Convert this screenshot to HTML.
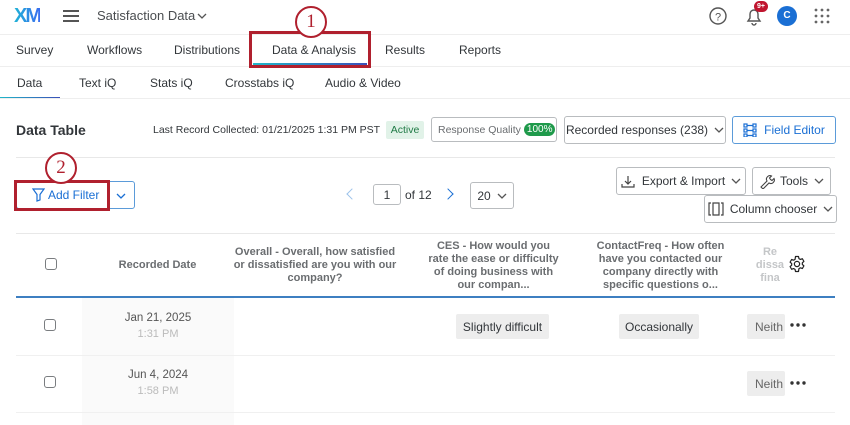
<!DOCTYPE html>
<html><head><meta charset="utf-8"><style>
*{box-sizing:border-box;margin:0;padding:0}
body{width:850px;height:425px;overflow:hidden;background:#fff;font-family:"Liberation Sans",sans-serif;color:#32363a;position:relative}
.a{position:absolute;white-space:nowrap}
.hl{position:absolute;height:1px;background:#e8e8e8}
.t{font-size:12px;line-height:14px}
.btn{position:absolute;border:1px solid #b9bcbf;border-radius:3px;background:#fff;font-size:12px;display:flex;align-items:center;justify-content:center;white-space:nowrap;color:#32363a}
.cv{margin-left:6px;display:block}
.hd{position:absolute;font-size:11px;font-weight:bold;color:#6a6d70;text-align:center;line-height:13px}
.cb{position:absolute;width:12px;height:12px;border:1.3px solid #7a7d80;border-radius:3px}
.pill{position:absolute;background:#ededed;font-size:12px;display:flex;align-items:center;justify-content:center;border-radius:2px}
.red{position:absolute;border:3px solid #b0202e}
.rc{position:absolute;width:32px;height:32px;border:2.5px solid #b0202e;border-radius:50%;background:#fff;color:#b0202e;font-size:19px;display:flex;align-items:center;justify-content:center;font-family:"Liberation Serif",serif}
</style></head><body>
<svg width="0" height="0" style="position:absolute"><defs><symbol id="cv" viewBox="0 0 10 6"><path d="M1 1l4 4 4-4" fill="none" stroke="#555" stroke-width="1.3"/></symbol></defs></svg>
<!-- top bar -->
<div class="a" style="left:14px;top:5px;font-size:20px;font-weight:bold;letter-spacing:-2px;background:linear-gradient(90deg,#1fb3d6,#3a6ef0);-webkit-background-clip:text;color:transparent">XM</div>
<div class="a" style="left:63px;top:10px;width:16px;height:2px;background:#555;box-shadow:0 5px 0 #555,0 10px 0 #555"></div>
<div class="a" style="left:97px;top:8px;font-size:13px;color:#4a4d50">Satisfaction Data</div>
<svg class="a" style="left:197px;top:13px" width="10" height="6"><use href="#cv"/></svg>
<svg class="a" style="left:709px;top:7px" width="18" height="18"><circle cx="9" cy="9" r="8" fill="none" stroke="#555" stroke-width="1.4"/><text x="9" y="13.5" font-size="11" text-anchor="middle" fill="#555" font-family="Liberation Sans">?</text></svg>
<svg class="a" style="left:744px;top:5px" width="20" height="22"><path d="M4 16h12l-2-3V9a4 4 0 0 0-8 0v4z" fill="none" stroke="#555" stroke-width="1.4"/><path d="M8 18a2 2 0 0 0 4 0" fill="none" stroke="#555" stroke-width="1.4"/></svg>
<div class="a" style="left:754px;top:1px;width:14px;height:11px;border-radius:6px;background:#c0152f;color:#fff;font-size:7px;font-weight:bold;text-align:center;line-height:11px">9+</div>
<div class="a" style="left:777px;top:6px;width:20px;height:20px;border-radius:50%;background:#1a6fd4;color:#fff;font-size:10px;font-weight:bold;text-align:center;line-height:20px">C</div>
<svg class="a" style="left:814px;top:8px" width="16" height="16"><g fill="#666"><circle cx="2" cy="2" r="1.4"/><circle cx="8" cy="2" r="1.4"/><circle cx="14" cy="2" r="1.4"/><circle cx="2" cy="8" r="1.4"/><circle cx="8" cy="8" r="1.4"/><circle cx="14" cy="8" r="1.4"/><circle cx="2" cy="14" r="1.4"/><circle cx="8" cy="14" r="1.4"/><circle cx="14" cy="14" r="1.4"/></g></svg>
<div class="hl" style="left:0;top:34px;width:850px;background:#eee"></div>
<!-- tabs -->
<div class="a t" style="left:16px;top:43px">Survey</div>
<div class="a t" style="left:87px;top:43px">Workflows</div>
<div class="a t" style="left:174px;top:43px">Distributions</div>
<div class="a t" style="left:272px;top:43px">Data &amp; Analysis</div>
<div class="a t" style="left:385px;top:43px">Results</div>
<div class="a t" style="left:459px;top:43px">Reports</div>
<div class="a" style="left:253px;top:63px;width:114px;height:2px;background:linear-gradient(90deg,#21b6c9,#3b4fb8)"></div>
<div class="hl" style="left:0;top:66px;width:850px;background:#eee"></div>
<div class="a t" style="left:17px;top:76px">Data</div>
<div class="a t" style="left:79px;top:76px">Text iQ</div>
<div class="a t" style="left:150px;top:76px">Stats iQ</div>
<div class="a t" style="left:225px;top:76px">Crosstabs iQ</div>
<div class="a t" style="left:325px;top:76px">Audio &amp; Video</div>
<div class="a" style="left:0;top:97px;width:60px;height:2px;background:linear-gradient(90deg,#21b6c9,#3b4fb8)"></div>
<div class="hl" style="left:0;top:98px;width:850px;background:#eee"></div>
<div class="red" style="left:249px;top:31px;width:122px;height:37px"></div>
<div class="rc" style="left:295px;top:6px">1</div>
<!-- data table header -->
<div class="a" style="left:16px;top:122px;font-size:14px;font-weight:bold">Data Table</div>
<div class="a" style="left:153px;top:124px;font-size:10.5px">Last Record Collected: 01/21/2025 1:31 PM PST</div>
<div class="a" style="left:386px;top:121px;width:38px;height:18px;background:#e1f2e8;border-radius:2px;color:#1f7a45;font-size:10.5px;text-align:center;line-height:18px">Active</div>
<div class="btn" style="left:431px;top:117px;width:126px;height:25px;font-size:10.5px;color:#6a6d70;justify-content:flex-start;padding-left:6px">Response Quality <span style="background:#1f9a4b;color:#fff;border-radius:8px;padding:1px 3px;margin-left:3px;font-size:10px">100%</span></div>
<div class="btn" style="left:564px;top:116px;width:162px;height:28px">Recorded responses (238)<svg class="cv" width="10" height="6"><use href="#cv"/></svg></div>
<div class="btn" style="left:732px;top:116px;width:104px;height:28px;border-color:#5b9bd9;color:#1a6fd4"><svg width="14" height="14" style="margin-right:7px"><g fill="none" stroke="#1a6fd4" stroke-width="1.2"><rect x="1" y="1" width="3" height="3"/><rect x="10" y="1" width="3" height="3"/><rect x="1" y="6" width="3" height="3"/><rect x="10" y="6" width="3" height="3"/><rect x="1" y="11" width="3" height="3"/><rect x="10" y="11" width="3" height="3"/><path d="M4 2.5h6M4 7.5h6M4 12.5h6"/></g></svg>Field Editor</div>
<div class="hl" style="left:16px;top:157px;width:819px"></div>
<!-- filter -->
<div class="btn" style="left:16px;top:181px;width:119px;height:28px;border-color:#5b9bd9"></div>
<div class="a" style="left:108px;top:181px;width:1px;height:28px;background:#5b9bd9"></div>
<svg class="a" style="left:116px;top:193px" width="10" height="6"><path d="M1 1l4 4 4-4" fill="none" stroke="#1a6fd4" stroke-width="1.3"/></svg>
<svg class="a" style="left:32px;top:188px" width="13" height="14"><path d="M1 1h11L8 6.5V12L5 13V6.5z" fill="none" stroke="#1a6fd4" stroke-width="1.2"/></svg>
<div class="a" style="left:48px;top:188px;font-size:12px;color:#1a6fd4">Add Filter</div>
<div class="red" style="left:14px;top:180px;width:96px;height:31px"></div>
<div class="rc" style="left:45px;top:152px">2</div>
<!-- pager -->
<div class="a" style="left:348px;top:190px;width:8px;height:8px;border-left:1.5px solid #9cc2ea;border-bottom:1.5px solid #9cc2ea;transform:rotate(45deg)"></div>
<div class="btn" style="left:373px;top:184px;width:28px;height:21px">1</div>
<div class="a t" style="left:405px;top:188px">of 12</div>
<div class="a" style="left:444px;top:190px;width:8px;height:8px;border-right:1.8px solid #1a6fd4;border-top:1.8px solid #1a6fd4;transform:rotate(45deg)"></div>
<div class="btn" style="left:470px;top:182px;width:44px;height:27px">20<svg class="cv" width="10" height="6"><use href="#cv"/></svg></div>
<div class="btn" style="left:616px;top:167px;width:130px;height:28px"><svg width="14" height="13" style="margin-right:7px"><path d="M7 1v8M4 6l3 3 3-3M1 9v3h12V9" fill="none" stroke="#444" stroke-width="1.2"/></svg>Export &amp; Import<svg class="cv" width="10" height="6"><use href="#cv"/></svg></div>
<div class="btn" style="left:752px;top:167px;width:79px;height:28px"><svg width="16" height="16" style="margin-right:5px"><path d="M2 14l6-6a3.5 3.5 0 0 1 4.5-5l-2 2 1 1.5 1.5 1 2-2a3.5 3.5 0 0 1-5 4.5l-6 6z" fill="none" stroke="#444" stroke-width="1.1"/></svg>Tools<svg class="cv" width="10" height="6"><use href="#cv"/></svg></div>
<div class="btn" style="left:704px;top:195px;width:133px;height:28px"><svg width="16" height="14" style="margin-right:6px"><path d="M3 1H1v12h2M13 1h2v12h-2M5 1h6v12H5z" fill="none" stroke="#444" stroke-width="1.2"/></svg>Column chooser<svg class="cv" width="10" height="6"><use href="#cv"/></svg></div>
<div class="hl" style="left:16px;top:233px;width:819px"></div>
<!-- table header -->
<div class="cb" style="left:45px;top:258px"></div>
<div class="hd" style="left:100px;top:259px;width:115px">Recorded Date</div>
<div class="hd" style="left:232px;top:246px;width:166px">Overall - Overall, how satisfied or dissatisfied are you with our company?</div>
<div class="hd" style="left:427px;top:240px;width:133px">CES - How would you rate the ease or difficulty of doing business with our compan...</div>
<div class="hd" style="left:592px;top:240px;width:137px">ContactFreq - How often have you contacted our company directly with specific questions o...</div>
<div class="hd" style="left:750px;top:246px;width:40px;color:#c4c6c8;overflow:hidden">Re<br>dissa<br>fina</div>
<svg class="a" style="left:788px;top:255px" width="18" height="18" viewBox="0 0 24 24"><path d="M12 8.5a3.5 3.5 0 1 0 0 7 3.5 3.5 0 0 0 0-7zM10 2h4l.6 2.8 1.9 1.1 2.7-.9 2 3.5-2.1 1.9v2.2l2.1 1.9-2 3.5-2.7-.9-1.9 1.1L14 22h-4l-.6-2.8-1.9-1.1-2.7.9-2-3.5 2.1-1.9v-2.2L2.8 9.5l2-3.5 2.7.9 1.9-1.1z" fill="none" stroke="#222" stroke-width="1.6" stroke-linejoin="round"/></svg>
<div class="a" style="left:16px;top:296px;width:819px;height:2px;background:#3d7fc1"></div>
<!-- rows -->
<div class="a" style="left:82px;top:298px;width:152px;height:127px;background:#fafafa"></div>
<div class="cb" style="left:44px;top:319px"></div>
<div class="a" style="left:82px;top:312px;width:152px;text-align:center;font-size:11.5px;color:#555">Jan 21, 2025</div>
<div class="a" style="left:82px;top:328px;width:152px;text-align:center;font-size:11px;color:#bbb">1:31 PM</div>
<div class="pill" style="left:456px;top:314px;width:93px;height:25px">Slightly difficult</div>
<div class="pill" style="left:619px;top:314px;width:80px;height:25px">Occasionally</div>
<div class="pill" style="left:747px;top:314px;width:38px;height:25px;justify-content:flex-start;padding-left:8px;overflow:hidden;color:#666">Neith</div>
<svg class="a" style="left:790px;top:323px" width="16" height="4"><g fill="#333"><circle cx="2" cy="2" r="1.7"/><circle cx="8" cy="2" r="1.7"/><circle cx="14" cy="2" r="1.7"/></g></svg>
<div class="hl" style="left:16px;top:355px;width:819px;background:#f0f0f0"></div>
<div class="cb" style="left:44px;top:376px"></div>
<div class="a" style="left:82px;top:369px;width:152px;text-align:center;font-size:11.5px;color:#555">Jun 4, 2024</div>
<div class="a" style="left:82px;top:385px;width:152px;text-align:center;font-size:11px;color:#bbb">1:58 PM</div>
<div class="pill" style="left:747px;top:371px;width:38px;height:25px;justify-content:flex-start;padding-left:8px;overflow:hidden;color:#666">Neith</div>
<svg class="a" style="left:790px;top:381px" width="16" height="4"><g fill="#333"><circle cx="2" cy="2" r="1.7"/><circle cx="8" cy="2" r="1.7"/><circle cx="14" cy="2" r="1.7"/></g></svg>
<div class="hl" style="left:16px;top:412px;width:819px;background:#f0f0f0"></div>
</body></html>
